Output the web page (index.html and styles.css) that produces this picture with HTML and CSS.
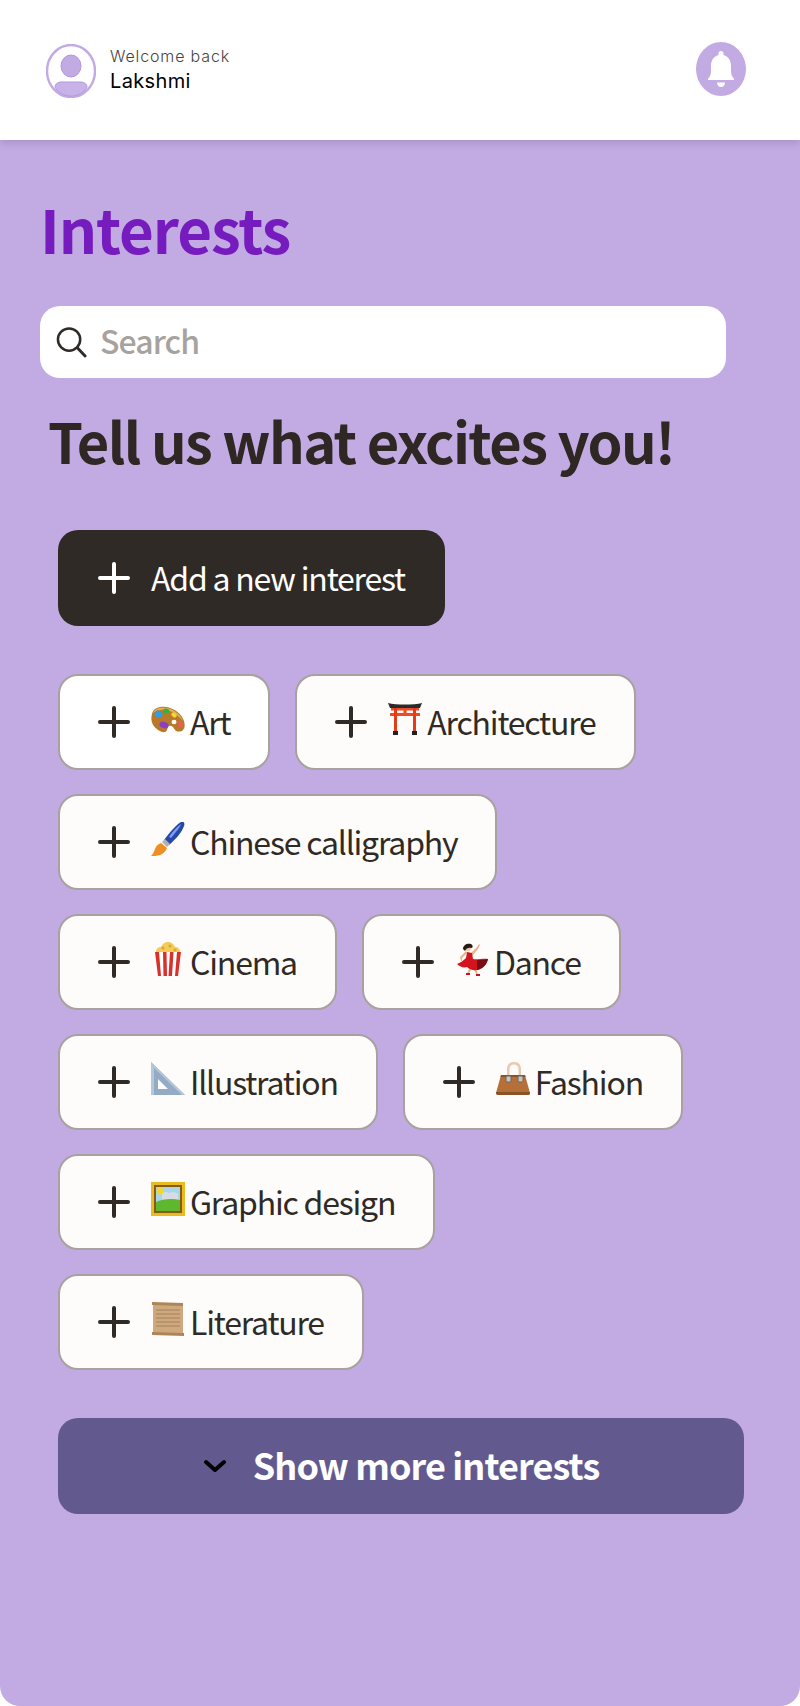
FILE: index.html
```html
<!DOCTYPE html>
<html lang="en">
<head>
    <meta charset="utf-8">
    <title>Interests</title>
    <meta name="viewport" content="width=device-width, initial-scale=1.0">
    <link rel="stylesheet" href="styles.css">
</head>
<body>
    <header class="topbar">
        <div class="user">
            <svg class="avatar" viewBox="0 0 50 54">
                <ellipse cx="25" cy="27" rx="24" ry="26" fill="#fff" stroke="#c2aae3" stroke-width="2.4"/>
                <ellipse cx="25" cy="22" rx="10" ry="11" fill="#c2aae3" stroke="#b497e0" stroke-width="1"/>
                <path d="M9 43c0-3 3-5 6-5h20c3 0 6 2 6 5-3 6-9 9-16 9s-13-3-16-9z" fill="#c8b3e8" stroke="#b497e0" stroke-width="1"/>
            </svg>
            <div class="user-text">
                <div class="welcome">Welcome back</div>
                <div class="user-name">Lakshmi</div>
            </div>
        </div>
        <div class="bell">
            <svg viewBox="0 0 50 54" width="50" height="54">
                <path d="M25 9c-1.500 0-2.500 1-2.500 2.500v1.500c-5 1.500-7.500 5.500-7.500 11v5c0 3.500-1 6-3 7.500v1.500h26v-1.500c-2-1.500-3-4-3-7.500v-5c0-5.500-2.500-9.500-7.500-11v-1.500c0-1.500-1-2.500-2.500-2.500z" fill="#fff"/>
                <path d="M21 40.500h8c0 3-2 4.500-4 4.500s-4-1.500-4-4.500z" fill="#fff"/>
            </svg>
        </div>
    </header>

    <main class="content">
        <h1 class="title">Interests</h1>

        <div class="search">
            <svg class="search-icon" viewBox="0 0 32 32">
                <circle cx="13.5" cy="13.5" r="11.5" fill="none" stroke="#2f2a25" stroke-width="2.6"/>
                <path d="M22 22l8 8.5" fill="none" stroke="#2f2a25" stroke-width="3" stroke-linecap="round"/>
            </svg>
            <span class="search-text">Search</span>
        </div>

        <h2 class="tagline">Tell us what excites you!</h2>

        <div class="interests">
            <button class="chip chip-add" type="button">
                <svg class="plus" viewBox="0 0 32 32"><path d="M16 2v28M2 16h28"/></svg>
                <span>Add a new interest</span>
            </button>
            <div class="break"></div>

            <button class="chip chip-white" type="button">
                <svg class="plus" viewBox="0 0 32 32"><path d="M16 2v28M2 16h28"/></svg>
                <svg class="emoji" viewBox="0 0 34 34">
                    <path d="M1 12C2 6 9 4 15 5c8 1 16 7 18 14 1 4 1 7-1 9-2 2-6 2-8 0-2-3-3-5-6-4-2 1-1 5-4 6-4 1-9-3-12-7C0 19 0 15 1 12z" fill="#b87a2a"/>
                    <path d="M2 11C4 6 10 5 15 6c8 1 15 7 17 13-5-6-11-10-17-11C10 7 5 8 2 11z" fill="#e3b05a"/>
                    <ellipse cx="7.500" cy="12" rx="4" ry="3.200" fill="#2f9de8" transform="rotate(25 7.500 12)"/>
                    <ellipse cx="15" cy="9" rx="3.200" ry="2.500" fill="#35b338"/>
                    <ellipse cx="23" cy="13" rx="3" ry="2" fill="#f2d72e" transform="rotate(35 23 13)"/>
                    <ellipse cx="13" cy="23" rx="4.600" ry="3.200" fill="#8b3fc9" transform="rotate(15 13 23)"/>
                    <ellipse cx="23" cy="20" rx="2.500" ry="2.200" fill="#fdfcfa"/>
                    <ellipse cx="29.500" cy="22" rx="2.200" ry="3" fill="#ef5a5a" transform="rotate(-25 29.500 22)"/>
                </svg>
                <span>Art</span>
            </button>
            <button class="chip" type="button">
                <svg class="plus" viewBox="0 0 32 32"><path d="M16 2v28M2 16h28"/></svg>
                <svg class="emoji" viewBox="0 0 34 34">
                    <path d="M0 1c8 2 26 2 34 0l-2 5H2z" fill="#2a2a2a"/>
                    <path d="M3 6h28v2.500H3zM2 11h30v3H2z" fill="#ef4a23"/>
                    <path d="M6 6h3v26H6zM25 6h3v26h-3z" fill="#e33c18"/>
                    <path d="M15.500 8h3v3h-3z" fill="#ef4a23"/>
                    <path d="M5 29h5v4H5zM24 29h5v4h-5z" fill="#222"/>
                </svg>
                <span>Architecture</span>
            </button>
            <button class="chip" type="button">
                <svg class="plus" viewBox="0 0 32 32"><path d="M16 2v28M2 16h28"/></svg>
                <svg class="emoji" viewBox="0 0 34 34">
                    <path d="M13 18C19 10 26 2 30 0c3-1 4 1 3 4-2 6-8 13-15 19z" fill="#2748ab"/>
                    <path d="M18 15c3-5 8-10 12-13-1 4-7 10-10 14z" fill="#7f9cf0"/>
                    <path d="M11 20l3-3 5 5-3 3z" fill="#b0b0b0"/>
                    <path d="M10 21l6 5c-1 3-4 6-7 7-3 1-7 1-9 1 2-2 3-4 4-7 1-3 3-5 6-6z" fill="#ef8f23"/>
                </svg>
                <span>Chinese calligraphy</span>
            </button>
            <button class="chip" type="button">
                <svg class="plus" viewBox="0 0 32 32"><path d="M16 2v28M2 16h28"/></svg>
                <svg class="emoji" viewBox="0 0 34 34">
                    <path d="M5 10C5 6 8 5 10 5c1-3 4-5 7-5s6 2 7 5c2 0 5 1 5 5v3H5z" fill="#f2cb58"/>
                    <circle cx="12" cy="6" r="1.500" fill="#dfa52c"/>
                    <circle cx="19" cy="4" r="1.500" fill="#dfa52c"/>
                    <circle cx="24" cy="8" r="1.500" fill="#dfa52c"/>
                    <path d="M4 10h26l-3 23c0 .5-.5 1-1 1H8c-.5 0-1-.5-1-1z" fill="#fff"/>
                    <path d="M4 10h4l2 24H7zM12 10h3.500l.5 24h-3.500zM19 10h3.500l-1.500 24h-3.500zM26 10h4l-3 24h-3z" fill="#d9302c"/>
                </svg>
                <span>Cinema</span>
            </button>
            <button class="chip" type="button">
                <svg class="plus" viewBox="0 0 32 32"><path d="M16 2v28M2 16h28"/></svg>
                <svg class="emoji" viewBox="0 0 34 34">
                    <circle cx="13" cy="6" r="3" fill="#f0c6a0"/>
                    <path d="M8 7c0-4 4-6 8-5 2 1 2 3 1 4-3-1-6 0-7 3z" fill="#2a1a14"/>
                    <path d="M16 11l6-6 2-3 1 1-2 4-6 7z" fill="#e8b48c"/>
                    <path d="M12 11l-5 5 0 3-1 0-1-4 6-6z" fill="#e8b48c"/>
                    <path d="M14 27l-2 5 1.500.5 3-5.500zM21 27l2 5-1.500.5-3-5.500z" fill="#e8b48c"/>
                    <path d="M11 31h4v2h-4zM21 32h4v2h-4z" fill="#c2131f"/>
                    <path d="M12 10l5 1 1 6c4 1 11-1 15 0-1 5-5 10-11 11-4 1-8-1-10-3-3 1-7 0-10-3 3-1 6-3 9-6z" fill="#d3141f"/>
                    <path d="M22 18c4 0 8 0 11-1-1 5-5 10-11 11z" fill="#7a0c14"/>
                </svg>
                <span>Dance</span>
            </button>
            <button class="chip" type="button">
                <svg class="plus" viewBox="0 0 32 32"><path d="M16 2v28M2 16h28"/></svg>
                <svg class="emoji" viewBox="0 0 34 34">
                    <path d="M0 0l34 33H0z M7 17v10h10z" fill="#94abc6" fill-rule="evenodd"/>
                    <path d="M0 0l34 33-3 0L3 6v27H0z" fill="#b4c6d9"/>
                </svg>
                <span>Illustration</span>
            </button>
            <button class="chip" type="button">
                <svg class="plus" viewBox="0 0 32 32"><path d="M16 2v28M2 16h28"/></svg>
                <svg class="emoji" viewBox="0 0 34 34">
                    <path d="M11 16V7c0-4 2-7 7-7s7 3 7 7v9h-2.500V7c0-3-2-4.500-4.500-4.500S13.500 4 13.500 7v9z" fill="#ecc8ae"/>
                    <path d="M5 13h24l5 18c0 1-1 2-2 2H2c-1 0-2-1-2-2z" fill="#b5703a"/>
                    <path d="M5 13h24l.5 2H4.500z" fill="#8c5227"/>
                    <path d="M0 30h34v1c0 1-1 2-2 2H2c-1 0-2-1-2-2z" fill="#8c5227"/>
                    <rect x="10" y="14" width="5" height="6" rx="1" fill="#c9c6c0" stroke="#6c655c" stroke-width="1"/>
                    <rect x="22" y="14" width="5" height="6" rx="1" fill="#c9c6c0" stroke="#6c655c" stroke-width="1"/>
                </svg>
                <span>Fashion</span>
            </button>
            <button class="chip" type="button">
                <svg class="plus" viewBox="0 0 32 32"><path d="M16 2v28M2 16h28"/></svg>
                <svg class="emoji" viewBox="0 0 34 34">
                    <rect x="0" y="0" width="34" height="34" fill="#e8bb1f"/>
                    <rect x="3" y="3" width="28" height="28" fill="#8a5a14"/>
                    <rect x="5" y="5" width="24" height="24" fill="#a6d6ea"/>
                    <circle cx="9" cy="9" r="3.500" fill="#f4d72a"/>
                    <path d="M11 12c2-3 5-2 7-1 3-2 7-1 9 1v6H11z" fill="#d7dce2"/>
                    <path d="M5 20c6-3 16-4 24-2v11H5z" fill="#5eb72e"/>
                </svg>
                <span>Graphic design</span>
            </button>
            <button class="chip" type="button">
                <svg class="plus" viewBox="0 0 32 32"><path d="M16 2v28M2 16h28"/></svg>
                <svg class="emoji" viewBox="0 0 34 34">
                    <rect x="2" y="1" width="30" height="32" fill="#cfa97e"/>
                    <path d="M1 0l31 1v3L1 3zM1 30l32 1v3l-32-1z" fill="#ac8558"/>
                    <path d="M5 8h24M5 12h24M5 16h24M5 20h24M5 24h24" stroke="#a5815a" stroke-width="1.200"/>
                </svg>
                <span>Literature</span>
            </button>

            <button class="show-more" type="button">
                <svg class="chevron" viewBox="0 0 24 14"><path d="M3 3l9 8 9-8"/></svg>
                <span>Show more interests</span>
            </button>
        </div>
    </main>
</body>
</html>
```

FILE: styles.css
```css
html, body {
    height: 100%;
}
body {
    margin: 0;
    background-color: #fff;
    font-family: 'Noto Sans CJK SC', 'Noto Sans', sans-serif;
    color: #2f2a25;
    display: flex;
    flex-direction: column;
}
.topbar {
    height: 140px;
    flex: none;
    box-sizing: border-box;
    padding: 0 54px 0 46px;
    display: flex;
    align-items: center;
    justify-content: space-between;
    background: #fff;
    position: relative;
    box-shadow: 0 3px 8px rgba(0,0,0,0.14);
}
.user {
    display: flex;
    align-items: center;
    gap: 14px;
}
.avatar {
    width: 50px;
    height: 54px;
    display: block;
    margin-top: 2px;
}
.user-text {
    margin-bottom: 2px;
}
.welcome {
    font-family: 'Inter', sans-serif;
    font-size: 16px;
    font-weight: 300;
    letter-spacing: 0.85px;
    line-height: 24px;
    color: #444;
}
.user-name {
    font-family: 'Inter', sans-serif;
    font-size: 20px;
    letter-spacing: 0.35px;
    line-height: 26px;
    color: #000;
}
.bell {
    width: 50px;
    height: 54px;
    border-radius: 50%;
    background: #c2aae3;
    margin-bottom: 2px;
}
.bell svg {
    display: block;
}
.content {
    flex: 1;
    background: #c2aae3;
    border-radius: 0 0 20px 20px;
    padding: 50px 0 0 40px;
}
.title {
    margin: 0 0 40px 0;
    font-size: 60px;
    line-height: 76px;
    font-weight: 700;
    letter-spacing: -1.1px;
    color: #761bbd;
}
.search {
    width: 686px;
    height: 72px;
    box-sizing: border-box;
    padding-left: 16px;
    display: flex;
    align-items: center;
    gap: 13px;
    background: #fff;
    border-radius: 20px;
}
.search-icon {
    width: 31px;
    height: 32px;
}
.search-text {
    font-size: 32px;
    font-weight: 500;
    letter-spacing: -0.9px;
    color: #a8a29e;
    margin-top: -4px;
}
.tagline {
    margin: 26px 0 54px 8px;
    font-size: 56px;
    line-height: 72px;
    font-weight: 700;
    letter-spacing: -1.6px;
    color: #2f2723;
}
.interests {
    width: 686px;
    margin-left: 18px;
    display: flex;
    flex-wrap: wrap;
    gap: 24px 25px;
}
.break {
    flex-basis: 100%;
    height: 1px;
    margin-top: -24px;
}
.chip {
    height: 96px;
    box-sizing: border-box;
    padding: 0 38px;
    display: flex;
    align-items: center;
    border: 2px solid #a8a29e;
    border-radius: 20px;
    background: #fdfcfa;
    font-family: inherit;
    font-size: 32px;
    font-weight: 400;
    letter-spacing: -1.2px;
    color: #2f2a25;
}
.chip span {
    margin-top: -3px;
}
.chip-white {
    background: #fff;
}
.chip-add {
    border: none;
    padding: 0 40px;
    background: #2f2a25;
    color: #fff;
}
.plus {
    width: 32px;
    height: 32px;
    flex: none;
    margin-right: 21px;
    fill: none;
    stroke: currentColor;
    stroke-width: 4;
    stroke-linecap: round;
}
.emoji {
    width: 34px;
    height: 34px;
    flex: none;
    margin: -6px 5px 0 0;
}
.show-more {
    width: 686px;
    height: 96px;
    margin-top: 24px;
    display: flex;
    align-items: center;
    justify-content: center;
    gap: 26px;
    border: none;
    border-radius: 20px;
    background: #625a8e;
    font-family: inherit;
    font-size: 36px;
    font-weight: 700;
    letter-spacing: -0.9px;
    color: #fff;
}
.show-more span {
    margin-top: -5px;
}
.chevron {
    width: 24px;
    height: 14px;
    fill: none;
    stroke: #000;
    stroke-width: 4;
    stroke-linecap: round;
    stroke-linejoin: round;
}
```
